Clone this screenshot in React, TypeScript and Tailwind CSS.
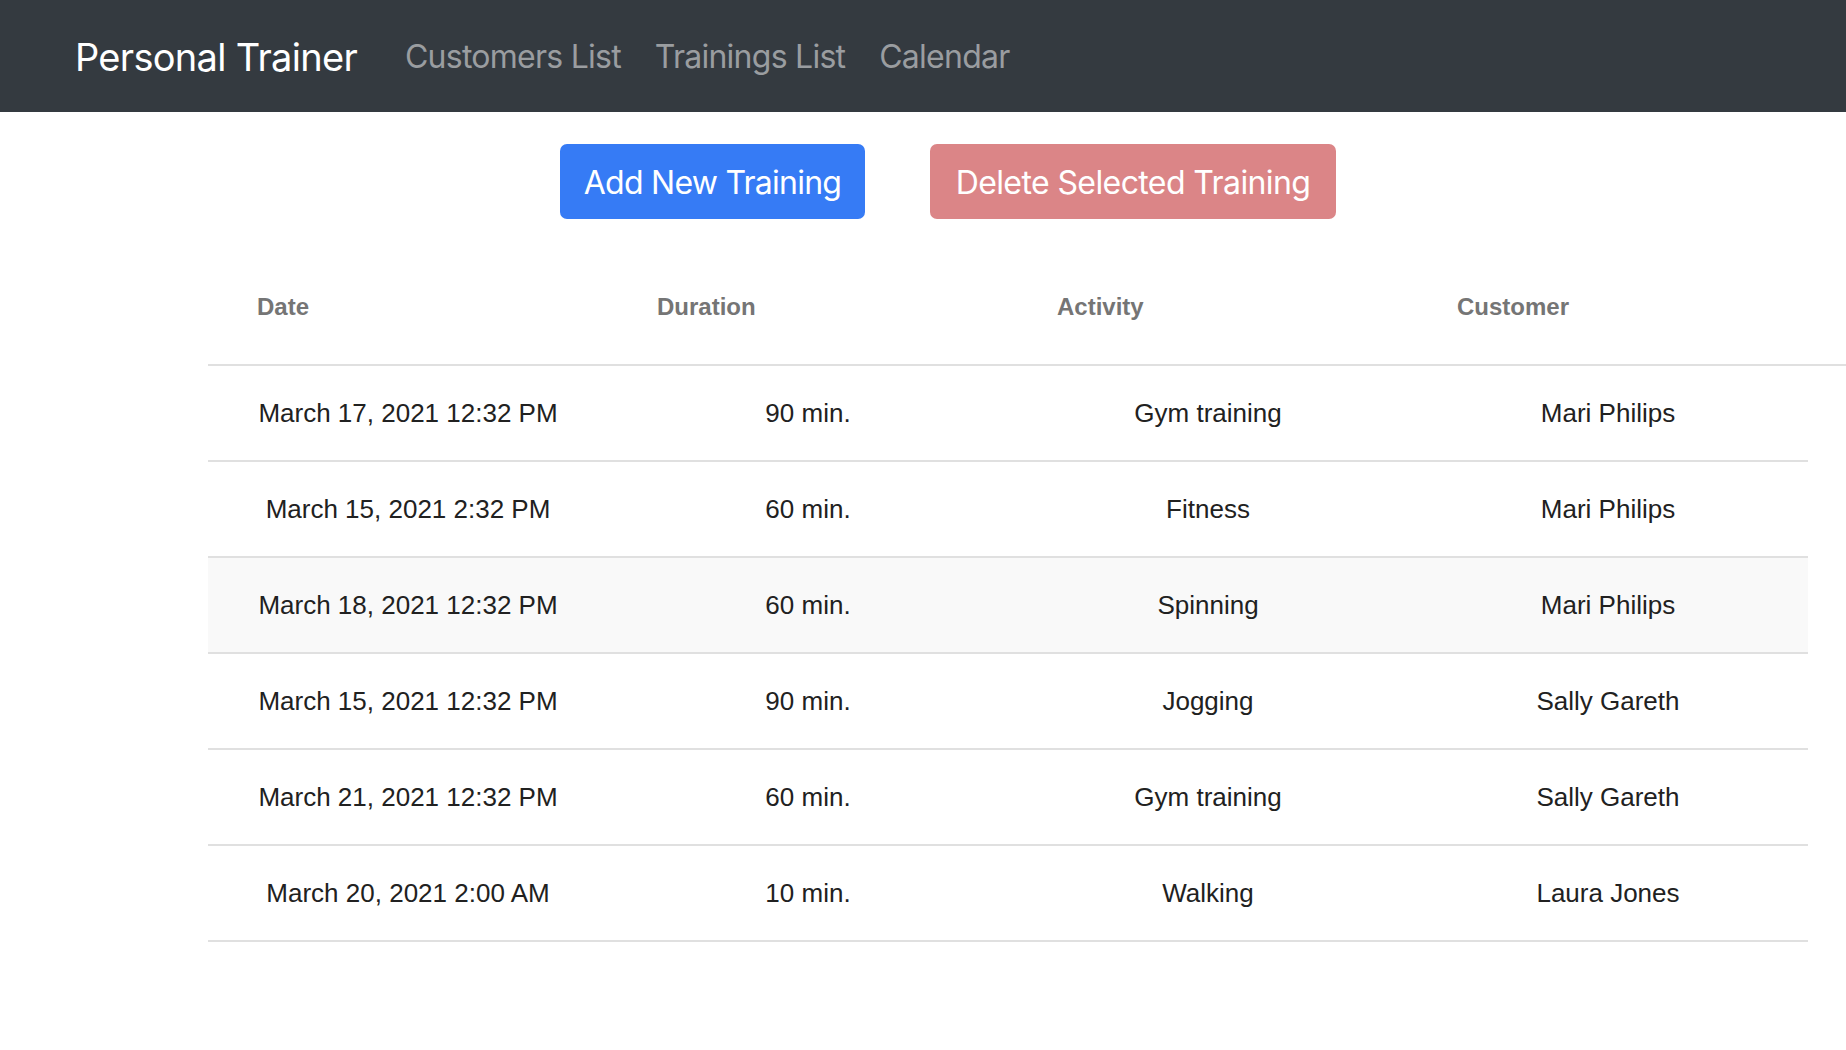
const trainings = [
  { date: "March 17, 2021 12:32 PM", duration: "90 min.", activity: "Gym training", customer: "Mari Philips" },
  { date: "March 15, 2021 2:32 PM", duration: "60 min.", activity: "Fitness", customer: "Mari Philips" },
  { date: "March 18, 2021 12:32 PM", duration: "60 min.", activity: "Spinning", customer: "Mari Philips", hover: true },
  { date: "March 15, 2021 12:32 PM", duration: "90 min.", activity: "Jogging", customer: "Sally Gareth" },
  { date: "March 21, 2021 12:32 PM", duration: "60 min.", activity: "Gym training", customer: "Sally Gareth" },
  { date: "March 20, 2021 2:00 AM", duration: "10 min.", activity: "Walking", customer: "Laura Jones" },
];

const columns = ["Date", "Duration", "Activity", "Customer"];

export default function App() {
  return (
    <div className="min-h-screen bg-white font-['Inter',sans-serif]">
      {/* Navbar */}
      <nav className="h-[112px] bg-[#343a40] flex items-center pl-[75px] pt-[2px]">
        <span className="text-[38px] text-white tracking-[-0.7px] mr-[31px]">Personal Trainer</span>
        <a href="#" className="px-[17px] text-[32px] text-[#9a9da0] tracking-[-0.75px]">Customers List</a>
        <a href="#" className="px-[17px] text-[32px] text-[#9a9da0] tracking-[-0.75px]">Trainings List</a>
        <a href="#" className="px-[17px] text-[32px] text-[#9a9da0] tracking-[-0.75px]">Calendar</a>
      </nav>

      {/* Actions */}
      <div className="flex gap-[65px] pl-[560px] pt-[32px]">
        <button className="w-[305px] h-[75px] pt-[2px] rounded-[7px] bg-[#367bf5] text-white text-[32px] tracking-[-0.75px]">
          Add New Training
        </button>
        <button className="w-[406px] h-[75px] pt-[2px] rounded-[7px] bg-[#db8587] text-white text-[32px] tracking-[-0.6px]">
          Delete Selected Training
        </button>
      </div>

      {/* Table */}
      <div className="ml-[208px] font-['Liberation_Sans',Arial,sans-serif]">
        <div className="w-[1638px] border-b-2 border-[#e0e0e0] pt-[70px] pb-[39px]">
          <div className="grid grid-cols-[400px_400px_400px_400px]">
            {columns.map((c) => (
              <div key={c} className="pl-[49px] text-[24px] leading-[36px] font-bold text-[#757575]">
                {c}
              </div>
            ))}
          </div>
        </div>
        {trainings.map((t, i) => (
          <div
            key={i}
            className={`w-[1600px] h-[96px] border-b-2 border-[#e0e0e0] grid grid-cols-[400px_400px_400px_400px] items-center text-[26px] text-[#212121] text-center ${t.hover ? "bg-[#f9f9f9]" : "bg-white"}`}
          >
            <div>{t.date}</div>
            <div>{t.duration}</div>
            <div>{t.activity}</div>
            <div>{t.customer}</div>
          </div>
        ))}
      </div>
    </div>
  );
}
